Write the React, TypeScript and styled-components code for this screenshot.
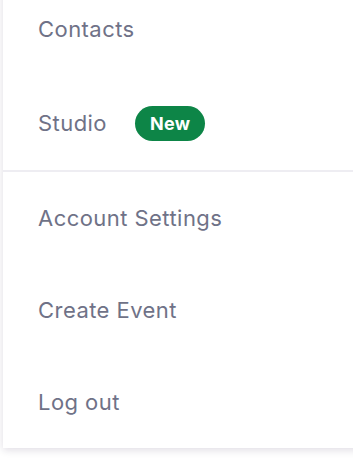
import React from 'react';
import styled, { createGlobalStyle } from 'styled-components';

const GlobalStyle = createGlobalStyle`
    html, body {
        margin: 0;
        padding: 0;
        background: #ffffff;
        overflow: hidden;
    }
    body {
        font-family: Inter, "Noto Sans", sans-serif;
    }
`;

const Page = styled.div`
    width: 353px;
    height: 462px;
    overflow: hidden;
    padding-left: 3px;
    box-sizing: border-box;
`;

const Menu = styled.nav`
    width: 380px;
    margin-top: -18px;
    background-color: #ffffff;
    box-shadow: 0 2px 8px rgba(30, 10, 60, 0.14);
`;

const Section = styled.ul`
    list-style: none;
    margin: 0;
    padding: 0;

    & + & {
        border-top: 2px solid #eeedf2;
    }
`;

const Item = styled.li<{ $tall?: boolean }>`
    display: flex;
    align-items: center;
    gap: 28px;
    height: ${ p => p.$tall ? 94 : 92 }px;
    padding-left: 35px;
    color: #6f7287;
    font-size: 22px;
    font-weight: 400;
    letter-spacing: 0.45px;
`;

const Badge = styled.span`
    display: inline-flex;
    align-items: center;
    justify-content: center;
    height: 35px;
    padding: 0 15px;
    border-radius: 18px;
    background-color: #0d8547;
    color: #ffffff;
    font-size: 18px;
    font-weight: 700;
    letter-spacing: 0.3px;
`;

const topItems = [
    { id: 1, name: 'Contacts' },
    { id: 2, name: 'Studio', badge: 'New' },
];

const accountItems = [
    { id: 1, name: 'Account Settings' },
    { id: 2, name: 'Create Event' },
    { id: 3, name: 'Log out' },
];

export default function App() {
    return (
        <Page>
            <GlobalStyle/>
            <Menu>
                <Section>
                    { topItems.map(item => (
                        <Item key={ item.id } $tall>
                            { item.name }
                            { item.badge && <Badge>{ item.badge }</Badge> }
                        </Item>
                    )) }
                </Section>
                <Section>
                    { accountItems.map(item => (
                        <Item key={ item.id }>{ item.name }</Item>
                    )) }
                </Section>
            </Menu>
        </Page>
    );
}
